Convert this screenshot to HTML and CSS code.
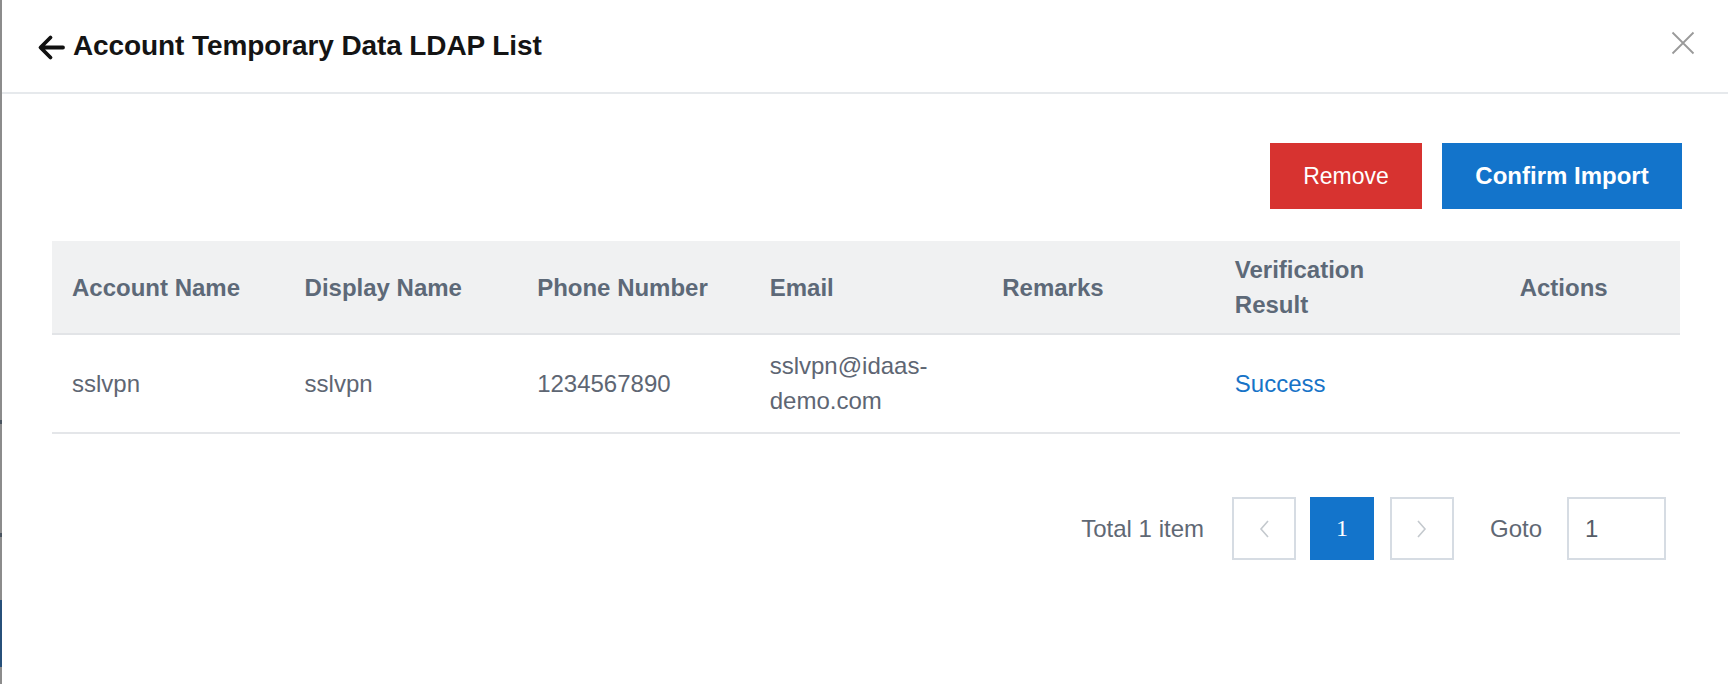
FILE: index.html
```html
<!DOCTYPE html>
<html lang="en">
<head>
<meta charset="utf-8">
<title>Account Temporary Data LDAP List</title>
<link rel="stylesheet" href="styles.css">
</head>
<body>
<div class="screen">
  <div class="backdrop-edge">
    <span class="edge-mark edge-mark-a"></span>
    <span class="edge-mark edge-mark-b"></span>
    <span class="edge-blue"></span>
  </div>
  <div class="modal">
    <header class="modal-header">
      <div class="title-wrap">
        <svg class="back-icon" width="28" height="27" viewBox="0 0 28 27" aria-hidden="true">
          <path d="M26 13.5H4M13.5 3.5L3.5 13.5L13.5 23.5" fill="none" stroke="#111" stroke-width="3.8" stroke-linecap="round" stroke-linejoin="round"/>
        </svg>
        <h1 class="modal-title">Account Temporary Data LDAP List</h1>
      </div>
      <button class="close-btn" aria-label="Close">
        <svg width="24" height="24" viewBox="0 0 24 24" aria-hidden="true">
          <path d="M1.5 1.5L22.5 22.5M22.5 1.5L1.5 22.5" fill="none" stroke="#9a9a9a" stroke-width="1.8"/>
        </svg>
      </button>
    </header>
    <div class="modal-body">
      <div class="toolbar">
        <button class="btn btn-danger">Remove</button>
        <button class="btn btn-primary">Confirm Import</button>
      </div>
      <table class="grid">
        <thead>
          <tr>
            <th>Account Name</th>
            <th>Display Name</th>
            <th>Phone Number</th>
            <th>Email</th>
            <th>Remarks</th>
            <th>Verification Result</th>
            <th class="col-actions">Actions</th>
          </tr>
        </thead>
        <tbody>
          <tr>
            <td>sslvpn</td>
            <td>sslvpn</td>
            <td>1234567890</td>
            <td>sslvpn@idaas-demo.com</td>
            <td></td>
            <td><span class="status-success">Success</span></td>
            <td></td>
          </tr>
        </tbody>
      </table>
      <div class="pager">
        <span class="pager-total">Total 1 item</span>
        <button class="page-box page-nav prev" aria-label="Previous">
          <svg width="12" height="20" viewBox="0 0 12 20" aria-hidden="true"><path d="M10 2L3 10L10 18" fill="none" stroke="#c4c9ce" stroke-width="1.6"/></svg>
        </button>
        <button class="page-box page-active">1</button>
        <button class="page-box page-nav next" aria-label="Next">
          <svg width="12" height="20" viewBox="0 0 12 20" aria-hidden="true"><path d="M2 2L9 10L2 18" fill="none" stroke="#c4c9ce" stroke-width="1.6"/></svg>
        </button>
        <span class="pager-goto">Goto</span>
        <input class="goto-input" type="text" value="1">
      </div>
    </div>
  </div>
</div>
</body>
</html>
```

FILE: styles.css
```css
* { box-sizing: border-box; }

html, body {
  margin: 0;
  padding: 0;
  background: #ffffff;
}

body {
  font-family: "Liberation Sans", Arial, Helvetica, sans-serif;
  color: #5e6673;
}

.screen {
  display: flex;
  width: 1728px;
  height: 684px;
  overflow: hidden;
}

.backdrop-edge {
  position: relative;
  flex: 0 0 2px;
  background: #8c8c8c;
}

.edge-blue {
  position: absolute;
  left: 0;
  top: 600px;
  width: 2px;
  height: 67px;
  background: #27507a;
}

.edge-mark {
  position: absolute;
  left: 0;
  width: 2px;
  height: 4px;
  background: #4a5560;
}

.edge-mark-a { top: 420px; }
.edge-mark-b { top: 533px; }

.modal {
  flex: 1;
  display: flex;
  flex-direction: column;
  background: #ffffff;
}

.modal-header {
  height: 94px;
  display: flex;
  align-items: center;
  justify-content: space-between;
  padding: 0 33px 0 35px;
  border-bottom: 2px solid #e6e9ec;
}

.title-wrap {
  display: flex;
  align-items: center;
  gap: 8px;
}

.back-icon {
  display: block;
  margin-top: 2px;
}

.modal-title {
  margin: 0;
  font-size: 28px;
  font-weight: 700;
  color: #141414;
  line-height: 32px;
  letter-spacing: -0.1px;
}

.close-btn {
  border: 0;
  background: transparent;
  padding: 0;
  width: 24px;
  height: 24px;
  margin-top: -6px;
  cursor: pointer;
}

.close-btn svg { display: block; }

.modal-body {
  padding: 49px 46px 0 50px;
}

.toolbar {
  display: flex;
  justify-content: flex-end;
  gap: 20px;
}

.btn {
  height: 66px;
  border: 0;
  color: #ffffff;
  font-family: "Liberation Sans", Arial, Helvetica, sans-serif;
  font-size: 23px;
  cursor: pointer;
}

.btn-danger {
  width: 152px;
  background: #d73330;
  font-weight: 400;
}

.btn-primary {
  width: 240px;
  background: #1374cb;
  font-weight: 700;
  font-size: 24px;
}

.grid {
  width: calc(100% - 2px);
  margin-top: 32px;
  border-collapse: collapse;
  table-layout: fixed;
  font-size: 24px;
}

.grid th {
  background: #f0f1f2;
  color: #5d6978;
  font-weight: 700;
  text-align: left;
  line-height: 35px;
  padding: 11px 20px 11px 20px;
  border-bottom: 2px solid #e2e4e7;
  vertical-align: middle;
}

.grid th.col-actions { text-align: center; }

.grid td {
  color: #5e6673;
  line-height: 35px;
  padding: 13px 20px 14px 20px;
  border-bottom: 2px solid #e4e6e9;
  vertical-align: middle;
}

.status-success { color: #1773c7; }

.pager {
  display: flex;
  justify-content: flex-end;
  align-items: center;
  margin-top: 63px;
  padding-right: 16px;
  font-size: 24px;
  color: #5f6874;
}

.pager-total { margin-right: 28px; }

.page-box {
  width: 64px;
  height: 63px;
  display: flex;
  align-items: center;
  justify-content: center;
  padding: 0;
  background: #ffffff;
  border: 2px solid #d6dce3;
  cursor: pointer;
}

.page-box svg { display: block; }

.page-active {
  margin: 0 16px 0 14px;
  background: #1374cb;
  border-color: #1374cb;
  color: #ffffff;
  font-family: "Liberation Serif", "Times New Roman", serif;
  font-size: 24px;
}

.pager-goto { margin: 0 25px 0 36px; }

.goto-input {
  width: 99px;
  height: 63px;
  border: 2px solid #d6dce3;
  padding: 0 16px;
  font-family: "Liberation Sans", Arial, Helvetica, sans-serif;
  font-size: 24px;
  color: #555c66;
  outline: none;
}
```
